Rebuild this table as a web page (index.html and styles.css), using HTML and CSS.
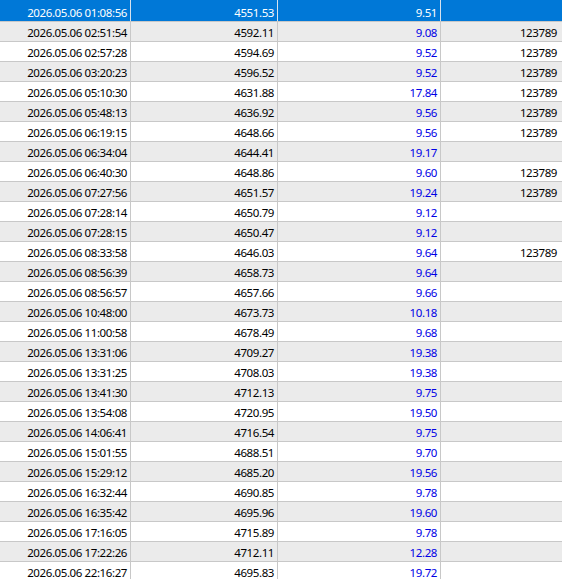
FILE: index.html
```html
<!DOCTYPE html>
<html>
<head>
<meta charset="utf-8">
<link rel="stylesheet" href="styles.css">
</head>
<body>
<div class="grid">
  <div class="row selected"><div class="cell c1">2026.05.06 01:08:56</div><div class="cell c2">4551.53</div><div class="cell c3">9.51</div><div class="cell c4"></div></div>
  <div class="row"><div class="cell c1">2026.05.06 02:51:54</div><div class="cell c2">4592.11</div><div class="cell c3">9.08</div><div class="cell c4">123789</div></div>
  <div class="row"><div class="cell c1">2026.05.06 02:57:28</div><div class="cell c2">4594.69</div><div class="cell c3">9.52</div><div class="cell c4">123789</div></div>
  <div class="row"><div class="cell c1">2026.05.06 03:20:23</div><div class="cell c2">4596.52</div><div class="cell c3">9.52</div><div class="cell c4">123789</div></div>
  <div class="row"><div class="cell c1">2026.05.06 05:10:30</div><div class="cell c2">4631.88</div><div class="cell c3">17.84</div><div class="cell c4">123789</div></div>
  <div class="row"><div class="cell c1">2026.05.06 05:48:13</div><div class="cell c2">4636.92</div><div class="cell c3">9.56</div><div class="cell c4">123789</div></div>
  <div class="row"><div class="cell c1">2026.05.06 06:19:15</div><div class="cell c2">4648.66</div><div class="cell c3">9.56</div><div class="cell c4">123789</div></div>
  <div class="row"><div class="cell c1">2026.05.06 06:34:04</div><div class="cell c2">4644.41</div><div class="cell c3">19.17</div><div class="cell c4"></div></div>
  <div class="row"><div class="cell c1">2026.05.06 06:40:30</div><div class="cell c2">4648.86</div><div class="cell c3">9.60</div><div class="cell c4">123789</div></div>
  <div class="row"><div class="cell c1">2026.05.06 07:27:56</div><div class="cell c2">4651.57</div><div class="cell c3">19.24</div><div class="cell c4">123789</div></div>
  <div class="row"><div class="cell c1">2026.05.06 07:28:14</div><div class="cell c2">4650.79</div><div class="cell c3">9.12</div><div class="cell c4"></div></div>
  <div class="row"><div class="cell c1">2026.05.06 07:28:15</div><div class="cell c2">4650.47</div><div class="cell c3">9.12</div><div class="cell c4"></div></div>
  <div class="row"><div class="cell c1">2026.05.06 08:33:58</div><div class="cell c2">4646.03</div><div class="cell c3">9.64</div><div class="cell c4">123789</div></div>
  <div class="row"><div class="cell c1">2026.05.06 08:56:39</div><div class="cell c2">4658.73</div><div class="cell c3">9.64</div><div class="cell c4"></div></div>
  <div class="row"><div class="cell c1">2026.05.06 08:56:57</div><div class="cell c2">4657.66</div><div class="cell c3">9.66</div><div class="cell c4"></div></div>
  <div class="row"><div class="cell c1">2026.05.06 10:48:00</div><div class="cell c2">4673.73</div><div class="cell c3">10.18</div><div class="cell c4"></div></div>
  <div class="row"><div class="cell c1">2026.05.06 11:00:58</div><div class="cell c2">4678.49</div><div class="cell c3">9.68</div><div class="cell c4"></div></div>
  <div class="row"><div class="cell c1">2026.05.06 13:31:06</div><div class="cell c2">4709.27</div><div class="cell c3">19.38</div><div class="cell c4"></div></div>
  <div class="row"><div class="cell c1">2026.05.06 13:31:25</div><div class="cell c2">4708.03</div><div class="cell c3">19.38</div><div class="cell c4"></div></div>
  <div class="row"><div class="cell c1">2026.05.06 13:41:30</div><div class="cell c2">4712.13</div><div class="cell c3">9.75</div><div class="cell c4"></div></div>
  <div class="row"><div class="cell c1">2026.05.06 13:54:08</div><div class="cell c2">4720.95</div><div class="cell c3">19.50</div><div class="cell c4"></div></div>
  <div class="row"><div class="cell c1">2026.05.06 14:06:41</div><div class="cell c2">4716.54</div><div class="cell c3">9.75</div><div class="cell c4"></div></div>
  <div class="row"><div class="cell c1">2026.05.06 15:01:55</div><div class="cell c2">4688.51</div><div class="cell c3">9.70</div><div class="cell c4"></div></div>
  <div class="row"><div class="cell c1">2026.05.06 15:29:12</div><div class="cell c2">4685.20</div><div class="cell c3">19.56</div><div class="cell c4"></div></div>
  <div class="row"><div class="cell c1">2026.05.06 16:32:44</div><div class="cell c2">4690.85</div><div class="cell c3">9.78</div><div class="cell c4"></div></div>
  <div class="row"><div class="cell c1">2026.05.06 16:35:42</div><div class="cell c2">4695.96</div><div class="cell c3">19.60</div><div class="cell c4"></div></div>
  <div class="row"><div class="cell c1">2026.05.06 17:16:05</div><div class="cell c2">4715.89</div><div class="cell c3">9.78</div><div class="cell c4"></div></div>
  <div class="row"><div class="cell c1">2026.05.06 17:22:26</div><div class="cell c2">4712.11</div><div class="cell c3">12.28</div><div class="cell c4"></div></div>
  <div class="row"><div class="cell c1">2026.05.06 22:16:27</div><div class="cell c2">4695.83</div><div class="cell c3">19.72</div><div class="cell c4"></div></div>
</div>
</body>
</html>
```
FILE: styles.css
```css
html, body {
  margin: 0;
  padding: 0;
  background: #ffffff;
  overflow: hidden;
}
body {
  font-family: "Noto Sans", "DejaVu Sans", sans-serif;
  font-size: 11.5px;
  letter-spacing: -0.4px;
  color: #000000;
}
.grid {
  display: flex;
  flex-direction: column;
  width: 562px;
}
.row {
  display: grid;
  grid-template-columns: 131px 147px 163px 1fr;
  height: 19px;
  border-bottom: 1px solid #c8c8c8;
  background: #ffffff;
}
.row:nth-child(even) {
  background: #ebebeb;
}
.row.selected {
  height: 21px;
  background: #0078d7;
  color: #ffffff;
}
.cell {
  display: flex;
  align-items: center;
  justify-content: flex-end;
  padding: 1px 3px 0 0;
  border-right: 1px solid #c8c8c8;
  white-space: nowrap;
}
.c3 {
  color: #0000e6;
}
.c4 {
  border-right: none;
  padding-right: 5px;
}
.selected .cell {
  color: #ffffff;
  border-right-color: #d6e2ee;
  padding-top: 3px;
}
.selected .c4 {
  border-right: none;
}
```
